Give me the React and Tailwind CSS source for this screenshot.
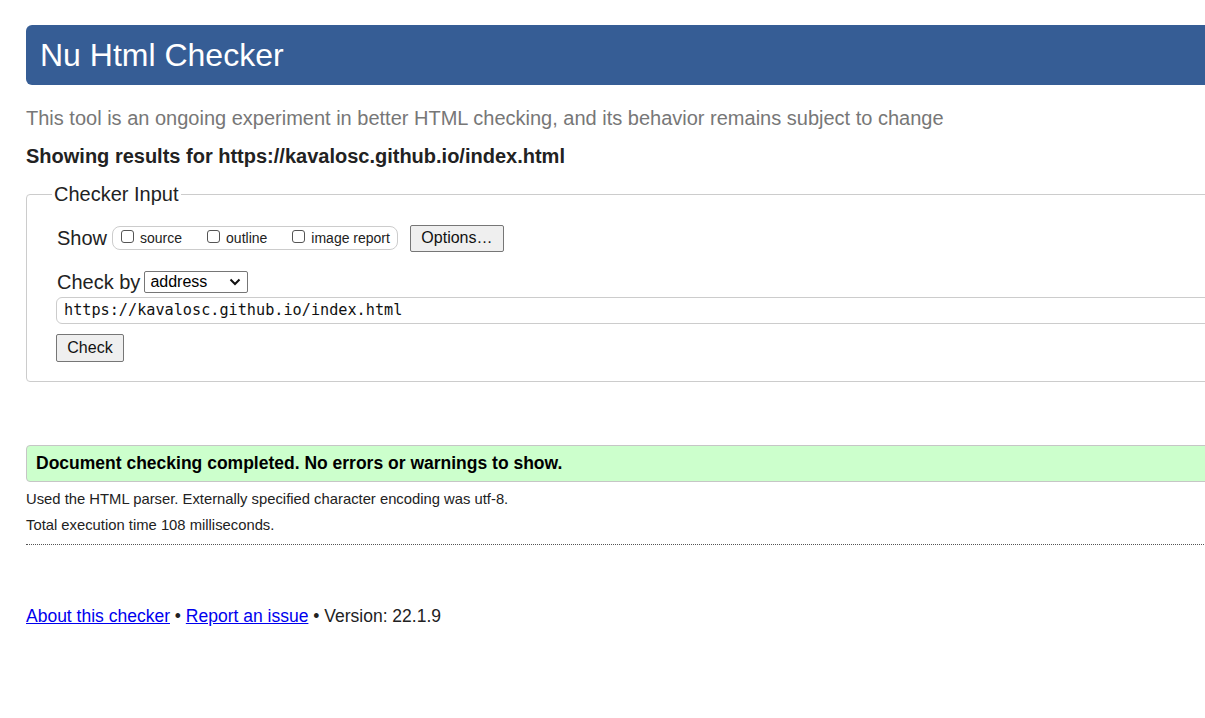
export default function App() {
  return (
    <div className="w-[1205px] h-[718px] overflow-hidden bg-white" style={{ fontFamily: '"Liberation Sans", Arial, sans-serif' }}>
      <div className="ml-[26px] w-[1300px] pt-[25px]">
        <h1 className="h-[60px] bg-[#365d95] rounded-l-[6px] text-white text-[32px] leading-[60px] pl-[14px]">Nu Html Checker</h1>
        <p className="mt-[21px] text-[20px] leading-[24px] text-[#777]">This tool is an ongoing experiment in better HTML checking, and its behavior remains subject to change</p>
        <p className="mt-[14px] text-[20px] leading-[24px] font-bold text-[#222]">Showing results for https://kavalosc.github.io/index.html</p>
        <fieldset className="mt-[14px] border border-[#ccc] rounded-l-[4px] pl-[30px] pr-2 pb-[19px] pt-[8px]">
          <legend className="text-[20px] leading-[24px] text-[#222] px-[2px] -ml-[5px]">Checker Input</legend>
          <div className="flex items-center h-[30px] mt-[9px]">
            <span className="text-[20px] text-[#222] mr-[5px]">Show</span>
            <div className="flex items-center h-[24px] border border-[#ccc] rounded-[8px] pl-[8px] pr-[7px] text-[14px] text-[#222]">
              <label className="flex items-center"><span className="w-[13px] h-[13px] border border-[#555] rounded-[3px] mr-[6px] -mt-[4px]" />source</label>
              <label className="flex items-center ml-[25px]"><span className="w-[13px] h-[13px] border border-[#555] rounded-[3px] mr-[6px] -mt-[4px]" />outline</label>
              <label className="flex items-center ml-[25px]"><span className="w-[13px] h-[13px] border border-[#555] rounded-[3px] mr-[6px] -mt-[4px]" />image report</label>
            </div>
            <button className="ml-[12px] h-[27px] w-[94px] bg-[#efefef] border border-[#767676] rounded-[2px] text-[16px] text-[#111]">Options…</button>
          </div>
          <div className="flex items-center mt-[17px] h-[24px]">
            <span className="text-[20px] text-[#222] mr-[4px]">Check by</span>
            <div className="flex items-center justify-between w-[104px] h-[22px] border border-[#767676] rounded-[2px] pl-[5px] pr-[6px] text-[16px] text-black">
              <span>address</span>
              <svg width="12" height="8" viewBox="0 0 12 8"><path d="M1.5 1.5 L6 6 L10.5 1.5" fill="none" stroke="#111" strokeWidth="2" /></svg>
            </div>
          </div>
          <div className="mt-[3px] h-[27px] border border-[#ccc] rounded-l-[6px] flex items-center pl-[7px] text-[#111] -ml-[1px]" style={{ fontFamily: '"DejaVu Sans Mono", "Liberation Mono", monospace' }}>
            <span className="text-[15.2px]">https://kavalosc.github.io/index.html</span>
          </div>
          <button className="mt-[10px] -ml-[1px] h-[28px] w-[68px] bg-[#efefef] border border-[#767676] rounded-[2px] text-[16px] text-[#111]">Check</button>
        </fieldset>
        <div className="mt-[63px] h-[37px] bg-[#ccffcc] border border-[#c6c6c6] rounded-l-[4px] flex items-center pl-[9px] text-[17.5px] font-bold text-black">
          Document checking completed. No errors or warnings to show.
        </div>
        <p className="mt-[8px] text-[14.8px] leading-[18px] text-[#222]">Used the HTML parser. Externally specified character encoding was utf-8.</p>
        <p className="mt-[8px] text-[14.8px] leading-[18px] text-[#222]">Total execution time 108 milliseconds.</p>
        <div className="mt-[10px] border-t border-dotted border-[#555]" />
        <p className="mt-[60px] text-[17.5px] leading-[22px] text-[#222]">
          <a className="text-[#0000ee] underline" href="#">About this checker</a> • <a className="text-[#0000ee] underline" href="#">Report an issue</a> • Version: 22.1.9
        </p>
      </div>
    </div>
  );
}
